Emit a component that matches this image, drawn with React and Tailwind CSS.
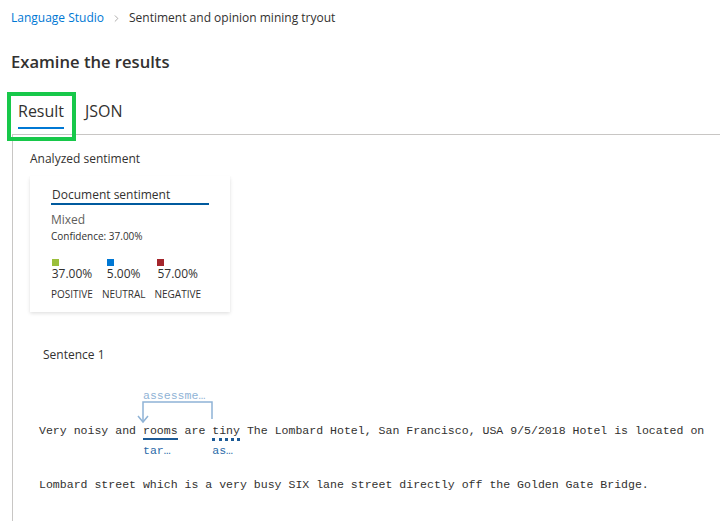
import { ChevronRight } from 'lucide-react';

const ui = "font-['Segoe_UI','Open_Sans',sans-serif]";
const mono = "font-['Liberation_Mono',monospace]";

function Score({ color, value, label }) {
  return (
    <div className="flex flex-col items-center">
      <div>
        <div className={`w-[7px] h-[7px] ${color}`} />
        <div className="text-[12px] leading-[16px] text-[#323130]">{value}</div>
      </div>
      <div className="mt-[5px] text-[10px] leading-[14px] text-[#323130]">{label}</div>
    </div>
  );
}

function DocumentCard() {
  return (
    <div className="mt-[9px] w-[200px] bg-white px-[21px] pt-[11px] pb-[11px] shadow-[0_1.6px_3.6px_rgba(0,0,0,0.13),0_0.3px_0.9px_rgba(0,0,0,0.11)]">
      <div className="border-b-2 border-[#005a9e] text-[12px] leading-[16px] text-[#323130] pl-px">
        Document sentiment
      </div>
      <div className="mt-[7px] text-[12px] leading-[16px] text-[#605e5c]">Mixed</div>
      <div className="mt-px text-[10px] leading-[14px] text-[#323130]">Confidence: 37.00%</div>
      <div className="mt-[16px] flex gap-[9px]">
        <Score color="bg-[#9bbf3b]" value="37.00%" label="POSITIVE" />
        <Score color="bg-[#0078d4]" value="5.00%" label="NEUTRAL" />
        <Score color="bg-[#a4262c]" value="57.00%" label="NEGATIVE" />
      </div>
    </div>
  );
}

function Annotated({ word, label, dotted, children }) {
  return (
    <span className="relative inline-block">
      {children}
      {word}
      <span
        className={
          dotted
            ? 'absolute left-0 right-0 top-[17px] h-0 border-b-[3px] border-dotted border-[#1c5a96]'
            : 'absolute left-0 right-0 top-[17px] h-[2px] bg-[#1c5a96]'
        }
      />
      <span className="absolute left-0 top-[21px] leading-[18px] text-[#2a6aa8] whitespace-nowrap">{label}</span>
    </span>
  );
}

export default function App() {
  return (
    <div className={`relative w-[720px] h-[521px] overflow-hidden bg-white ${ui}`}>
      <div className="flex items-center pt-[10px] pl-[11px] text-[12px] leading-[16px]">
        <span className="text-[#0078d4]">Language Studio</span>
        <ChevronRight className="mx-[7px] w-[11px] h-[11px] text-[#8a8886]" strokeWidth={1.5} />
        <span className="text-[#323130]">Sentiment and opinion mining tryout</span>
      </div>

      <h1 className="mt-[24px] pl-[11px] text-[16.6px] leading-[24px] font-semibold text-[#323130]">
        Examine the results
      </h1>

      <div className="mt-[26px] flex gap-[21px] pl-[18px] text-[16px] leading-[22px]">
        <div className="flex flex-col">
          <span className="text-[#323130]">Result</span>
          <span className="mt-[5px] h-[2px] bg-[#0078d4]" />
        </div>
        <span className="text-[#323130]">JSON</span>
      </div>

      <div className="mt-[5px] ml-[12px] h-[400px] border-l border-t border-[#c8c6c4] pl-[17px]">
        <div className="pt-[16px] text-[12px] leading-[16px] text-[#323130]">Analyzed sentiment</div>
        <DocumentCard />

        <div className="mt-[35px] pl-[13px] text-[12px] leading-[16px] text-[#323130]">Sentence 1</div>

        <div className={`mt-[58px] pl-[9px] ${mono} text-[11.56px] leading-[20px] text-[#323130] whitespace-pre`}>
          <div>
            {'Very noisy and '}
            <Annotated word="rooms" label="tar…">
              <svg className="absolute left-[-6px] top-[-26px] overflow-visible" width="82" height="30" viewBox="0 0 82 30">
                <path d="M6 27 V7 H75 V24" fill="none" stroke="#8fb3d6" strokeWidth="1.5" />
                <path d="M1 21 L6 27 L11 21" fill="none" stroke="#8fb3d6" strokeWidth="1.5" />
              </svg>
              <span className="absolute left-0 top-[-34px] leading-[18px] text-[#8fb3d6] whitespace-nowrap">assessme…</span>
            </Annotated>
            {' are '}
            <Annotated word="tiny" label="as…" dotted />
            {' The Lombard Hotel, San Francisco, USA 9/5/2018 Hotel is located on'}
          </div>
          <div className="mt-[34px]">
            Lombard street which is a very busy SIX lane street directly off the Golden Gate Bridge.
          </div>
        </div>
      </div>

      <div className="absolute left-[7px] top-[92px] w-[69px] h-[49px] border-[4px] border-[#17c84a]" />
    </div>
  );
}
